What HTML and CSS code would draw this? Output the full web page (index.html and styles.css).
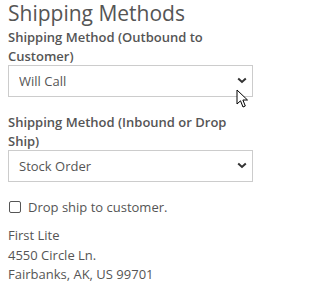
FILE: index.html
```html
<!DOCTYPE html>
<html>
<head>
<meta charset="utf-8">
<link rel="stylesheet" href="styles.css">
</head>
<body>
<div class="panel">
  <h2 class="title">Shipping Methods</h2>
  <div class="field">
    <label class="label" for="out">Shipping Method (Outbound to Customer)</label>
    <div class="select-wrap">
      <select id="out" class="select"><option>Will Call</option></select>
      <svg class="chev" width="10" height="7" viewBox="0 0 10 7"><path d="M1.2 1.5 L5 5 L8.8 1.5" fill="none" stroke="#333" stroke-width="2"/></svg>
      <svg class="cursor" width="14" height="20" viewBox="0 0 14 20"><path d="M1 1 L1 15 L4.5 11.8 L7 18 L9.3 17 L6.9 11 L11.5 11 Z" fill="#fff" stroke="#000" stroke-width="1" stroke-linejoin="round"/></svg>
    </div>
  </div>
  <div class="field field-second">
    <label class="label" for="in">Shipping Method (Inbound or Drop Ship)</label>
    <div class="select-wrap">
      <select id="in" class="select"><option>Stock Order</option></select>
      <svg class="chev" width="10" height="7" viewBox="0 0 10 7"><path d="M1.2 1.5 L5 5 L8.8 1.5" fill="none" stroke="#333" stroke-width="2"/></svg>
    </div>
  </div>
  <label class="check">
    <input type="checkbox" class="box">
    <span>Drop ship to customer.</span>
  </label>
  <div class="address">
    <div>First Lite</div>
    <div>4550 Circle Ln.</div>
    <div>Fairbanks, AK, US 99701</div>
  </div>
</div>
</body>
</html>
```

FILE: styles.css
```css
html, body {
  margin: 0;
  padding: 0;
  background: #fff;
}
body {
  font-family: "Open Sans", "Liberation Sans", sans-serif;
  color: #555;
}
.panel {
  width: 245px;
  padding: 0 8px;
  display: flex;
  flex-direction: column;
}
.title {
  margin: 0 0 2px 0;
  font-size: 21px;
  font-weight: 400;
  line-height: 26px;
  color: #555;
}
.field {
  display: flex;
  flex-direction: column;
}
.field-second {
  margin-top: 16px;
}
.label {
  font-size: 13px;
  font-weight: 600;
  line-height: 18.5px;
  color: #555;
  margin: 0;
}
.select-wrap {
  position: relative;
}
.select {
  -webkit-appearance: none;
  appearance: none;
  width: 100%;
  height: 32px;
  border: 1px solid #ccc;
  border-radius: 0;
  background: #fff;
  font-family: "Open Sans", "Liberation Sans", sans-serif;
  font-size: 13px;
  color: #555;
  padding: 0 10px;
  margin: 0;
  display: block;
}
.chev {
  position: absolute;
  right: 6px;
  top: 12px;
}
.cursor {
  position: absolute;
  left: 228px;
  top: 24px;
}
.check {
  display: flex;
  align-items: center;
  gap: 7px;
  margin-top: 15px;
  font-size: 13px;
  color: #555;
  line-height: 20px;
}
.box {
  -webkit-appearance: none;
  appearance: none;
  width: 12px;
  height: 12px;
  margin: 0 0 0 1px;
  border: 1px solid #555;
  border-radius: 2px;
  background: #fff;
}
.address {
  margin-top: 9px;
  font-size: 13px;
  line-height: 19.5px;
  color: #555;
}
```
